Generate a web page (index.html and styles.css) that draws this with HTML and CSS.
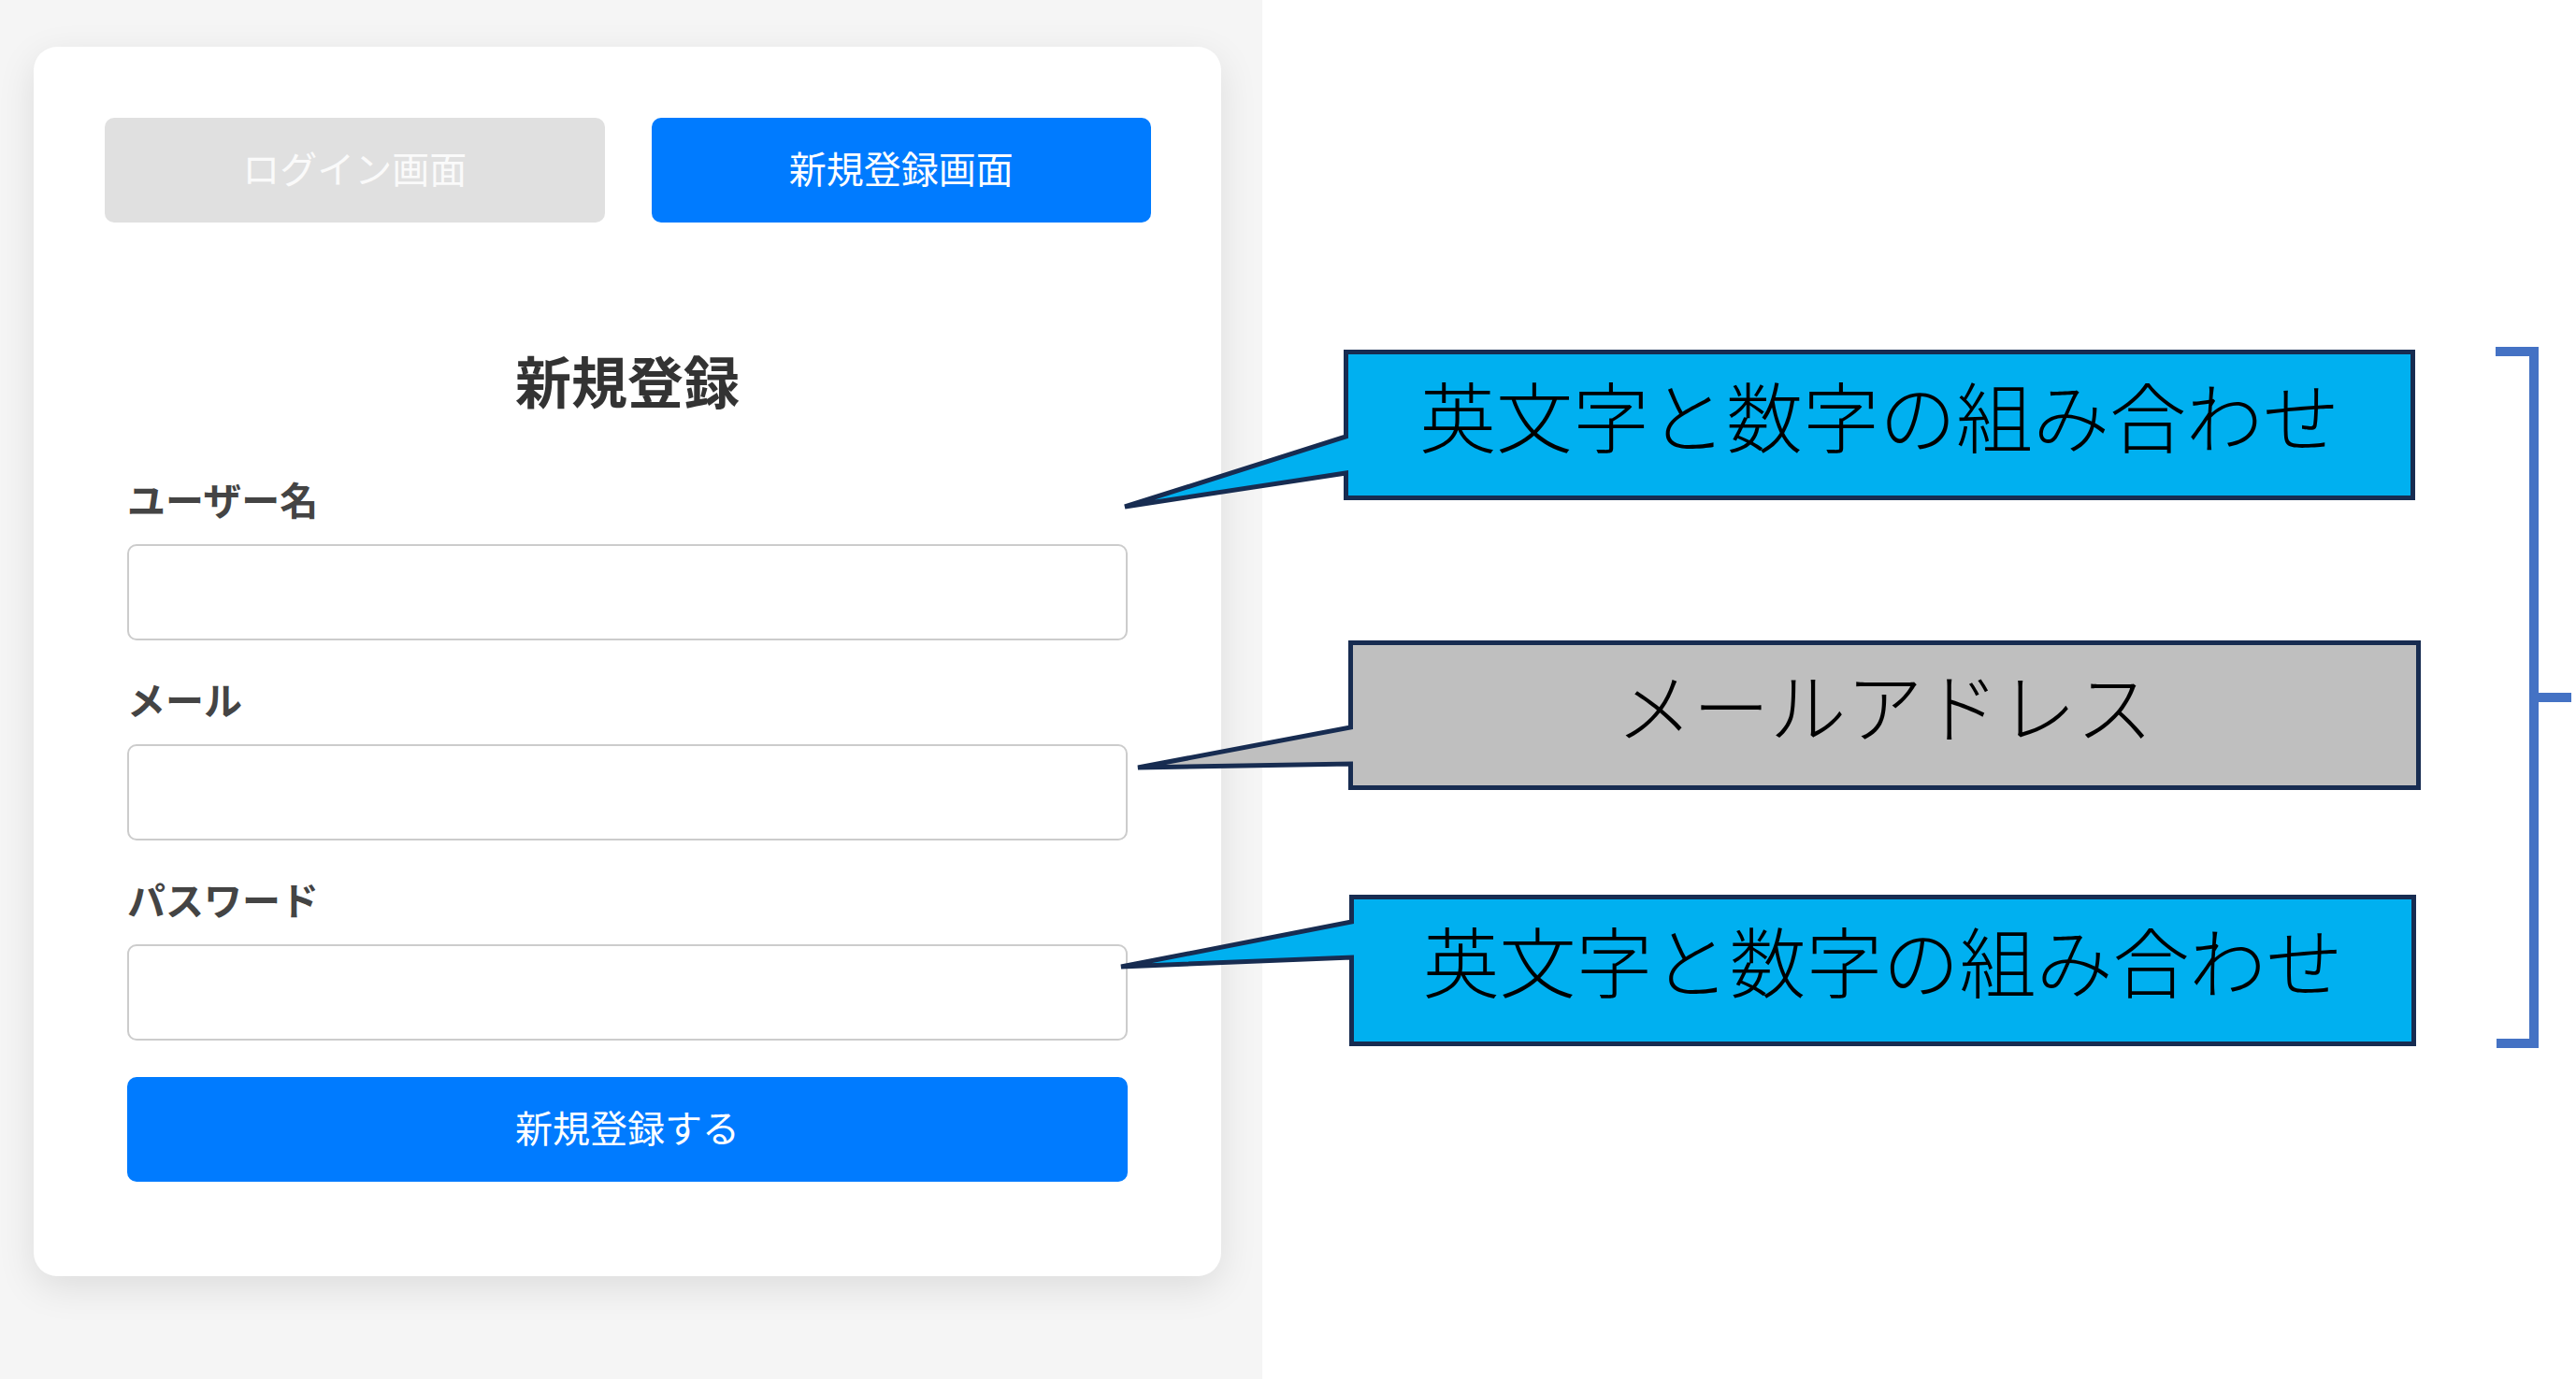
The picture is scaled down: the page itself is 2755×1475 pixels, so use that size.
FILE: index.html
```html
<!DOCTYPE html>
<html lang="ja">
<head>
<meta charset="utf-8">
<title>新規登録</title>
<link rel="stylesheet" href="styles.css">
</head>
<body>
<div class="stage">
  <div class="app">
    <div class="card">
      <div class="tabs">
        <button class="tab tab-inactive" type="button">ログイン画面</button>
        <button class="tab tab-active" type="button">新規登録画面</button>
      </div>
      <form class="form">
        <h2 class="title">新規登録</h2>
        <div class="field">
          <label class="label">ユーザー名</label>
          <input class="input" type="text">
        </div>
        <div class="field">
          <label class="label">メール</label>
          <input class="input" type="email">
        </div>
        <div class="field">
          <label class="label">パスワード</label>
          <input class="input" type="password">
        </div>
        <button class="submit" type="button">新規登録する</button>
      </form>
    </div>
  </div>
  <div class="canvas"></div>

  <svg class="overlay" viewBox="0 0 2755 1475" width="2755" height="1475" xmlns="http://www.w3.org/2000/svg">
    <path class="callout callout-blue" d="M1439.5,376.5 H2580.5 V532.5 H1439.5 V506 L1203,542 L1439.5,467 Z"/>
    <path class="callout callout-gray" d="M1444.5,687.5 H2586.5 V842.5 H1444.5 V817 L1217,821 L1444.5,778 Z"/>
    <path class="callout callout-blue" d="M1445.5,959.5 H2581.5 V1116.5 H1445.5 V1024 L1199,1034 L1445.5,986 Z"/>
    <path class="bracket" d="M2669,376 H2710 V1116 H2670 M2710,746 H2750"/>
  </svg>

  <div class="note note-1">英文字と数字の組み合わせ</div>
  <div class="note note-2">メールアドレス</div>
  <div class="note note-3">英文字と数字の組み合わせ</div>
</div>
</body>
</html>
```

FILE: styles.css
```css
html, body {
  margin: 0;
  padding: 0;
  background: #ffffff;
}

body {
  font-family: "Noto Sans CJK JP", "Noto Sans", sans-serif;
}

.stage {
  position: relative;
  width: 2755px;
  height: 1475px;
  display: flex;
  overflow: hidden;
}

.app {
  width: 1350px;
  flex: 0 0 1350px;
  background: #f5f5f5;
  padding: 50px 44px 0 36px;
  box-sizing: border-box;
}

.canvas {
  flex: 1;
  background: #ffffff;
}

.card {
  background: #ffffff;
  border-radius: 25px;
  padding: 76px 75px 101px 76px;
  box-shadow: 0 12px 40px rgba(0, 0, 0, 0.1);
}

.tabs {
  display: grid;
  grid-template-columns: 1fr 1fr;
  gap: 50px;
}

.tab {
  height: 112px;
  border: none;
  border-radius: 10px;
  font-family: "Noto Sans CJK JP", sans-serif;
  font-size: 40px;
  line-height: 1;
  padding: 0 0 6px;
}

.tab-inactive {
  background: #e0e0e0;
  color: #fafafa;
}

.tab-active {
  background: #007bff;
  color: #ffffff;
}

.form {
  padding: 0 25px 0 24px;
  margin: 0;
}

.title {
  margin: 123px 0 57px;
  font-size: 60px;
  line-height: 90px;
  font-weight: 700;
  text-align: center;
  color: #333333;
}

.field + .field {
  margin-top: 37px;
}

.label {
  display: block;
  font-size: 41px;
  line-height: 50px;
  font-weight: 700;
  color: #444444;
  margin-bottom: 24px;
}

.input {
  display: block;
  width: 100%;
  height: 103px;
  box-sizing: border-box;
  border: 2px solid #cccccc;
  border-radius: 10px;
  background: #ffffff;
  margin: 0;
}

.submit {
  display: block;
  width: 100%;
  height: 112px;
  margin-top: 39px;
  border: none;
  border-radius: 10px;
  background: #007bff;
  color: #ffffff;
  font-family: "Noto Sans CJK JP", sans-serif;
  font-size: 40px;
  line-height: 1;
  padding: 0 0 6px;
}

.overlay {
  position: absolute;
  left: 0;
  top: 0;
  pointer-events: none;
}

.callout {
  stroke: #172c51;
  stroke-width: 5;
  stroke-linejoin: miter;
}

.callout-blue {
  fill: #00b0f0;
}

.callout-gray {
  fill: #bfbfbf;
}

.bracket {
  fill: none;
  stroke: #4472c4;
  stroke-width: 10;
  stroke-linejoin: miter;
}

.note {
  position: absolute;
  display: flex;
  align-items: center;
  justify-content: center;
  font-family: "Noto Sans CJK JP", sans-serif;
  font-size: 82px;
  font-weight: 300;
  color: #000000;
  line-height: 1;
  padding-bottom: 24px;
  box-sizing: border-box;
}

.note-1 {
  left: 1437px;
  top: 374px;
  width: 1146px;
  height: 161px;
}

.note-2 {
  left: 1442px;
  top: 685px;
  width: 1147px;
  height: 160px;
}

.note-3 {
  left: 1443px;
  top: 957px;
  width: 1141px;
  height: 162px;
}
```
